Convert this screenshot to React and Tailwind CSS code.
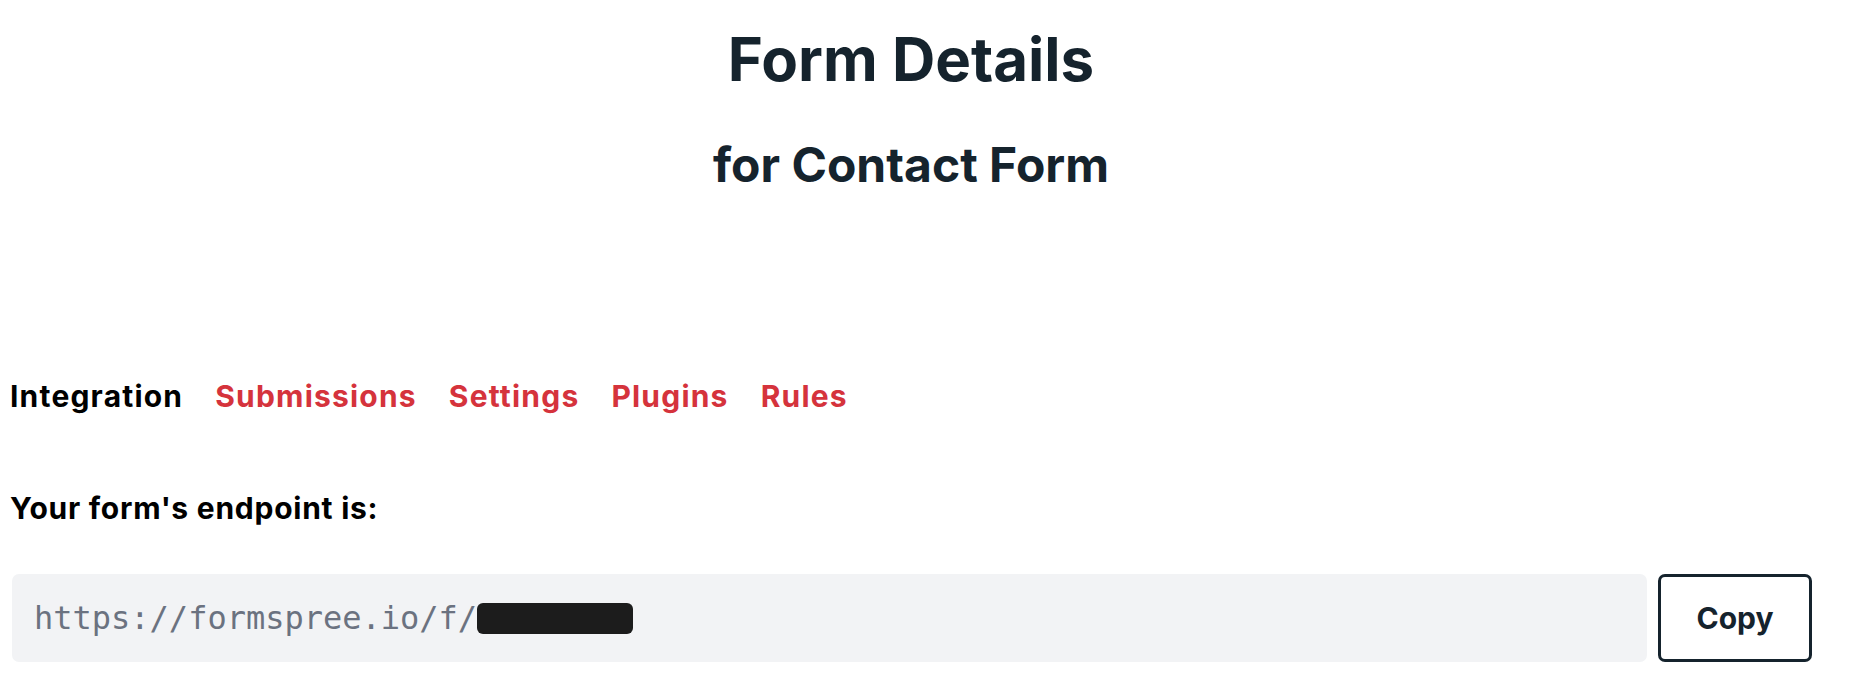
export default function App() {
  const tabs = ["Submissions", "Settings", "Plugins", "Rules"];
  return (
    <div className="w-[1864px] h-[676px] bg-white overflow-hidden" style={{ fontFamily: "Inter, 'Noto Sans', sans-serif" }}>
      <div className="ml-[10px] w-[1802px] flex flex-col">
        <h1 className="mt-[29px] text-center text-[60px] leading-none font-bold text-[#15232d]">Form Details</h1>
        <h2 className="mt-[52px] text-center text-[48px] leading-none font-bold text-[#15232d]">for Contact Form</h2>
        <nav className="mt-[192px] flex items-center gap-[32px] text-[30px] leading-none font-bold tracking-[0.04em]">
          <span className="text-black">Integration</span>
          {tabs.map((t) => (
            <a key={t} className="text-[#d5333c]">{t}</a>
          ))}
        </nav>
        <p className="mt-[82px] text-[30px] leading-none font-bold tracking-[0.025em] text-black">Your form's endpoint is:</p>
        <div className="mt-[51px] flex items-stretch gap-[11px]">
          <div className="ml-[2px] flex-1 h-[88px] bg-[#f2f3f5] rounded-[7px] flex items-center pl-[22px]">
            <span className="text-[32px] leading-none text-[#6b7280]" style={{ fontFamily: "'DejaVu Sans Mono', monospace" }}>https://formspree.io/f/</span>
            <span className="inline-block w-[156px] h-[31px] bg-[#1c1c1c] rounded-[6px]"></span>
          </div>
          <button className="w-[154px] h-[88px] border-[3px] border-[#15232d] rounded-[7px] bg-white text-[30px] font-bold text-[#15232d]">Copy</button>
        </div>
      </div>
    </div>
  );
}
